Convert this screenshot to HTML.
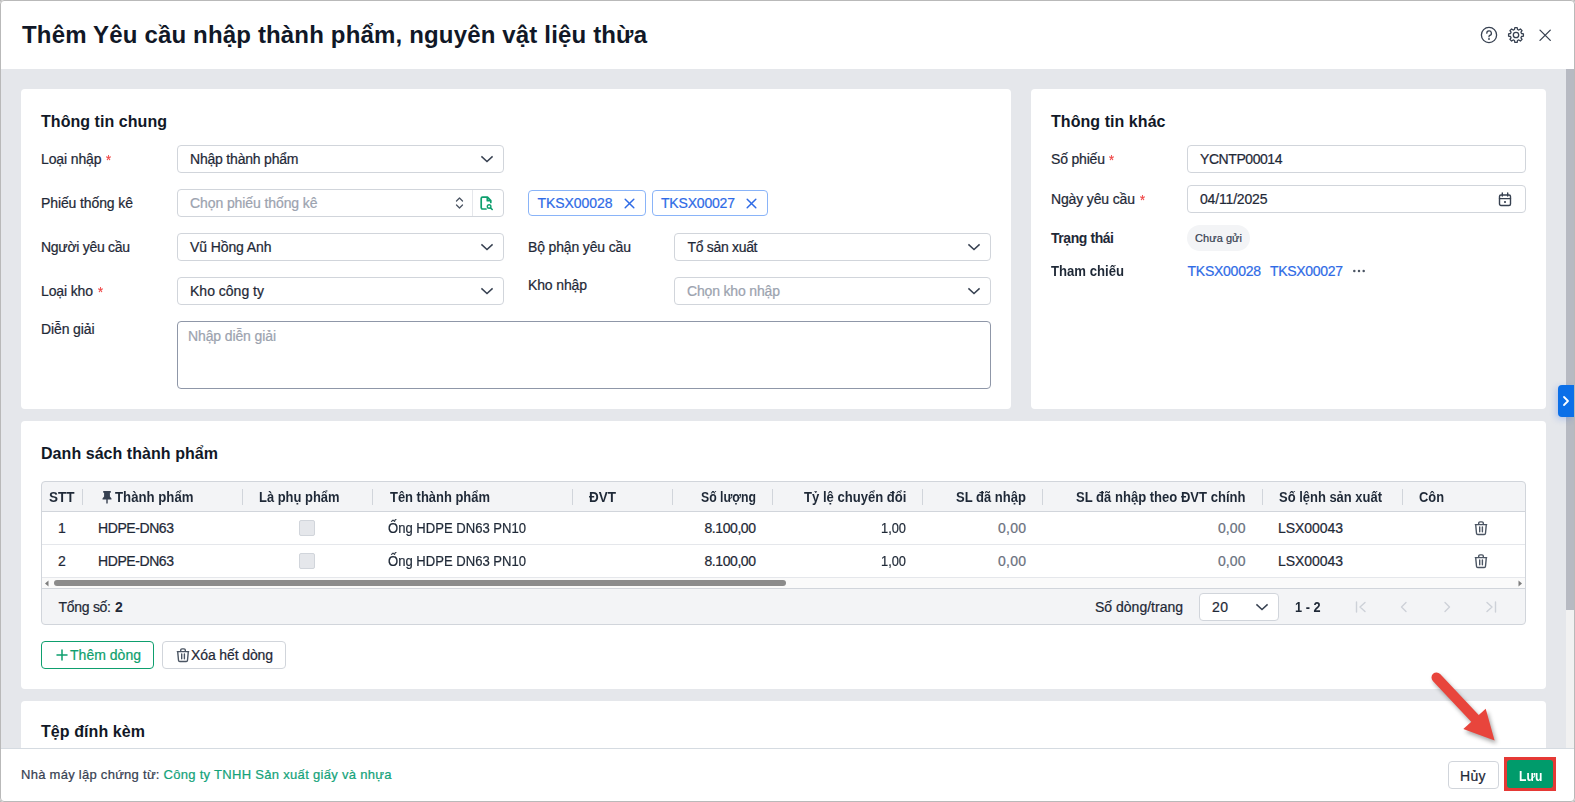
<!DOCTYPE html><html lang="vi"><head><meta charset="utf-8"><title>Thêm Yêu cầu nhập thành phẩm</title><style>
*{margin:0;padding:0;box-sizing:border-box}
html,body{width:1575px;height:802px;overflow:hidden;background:#fff}
body{font-family:"Liberation Sans",sans-serif;position:relative;color:#1f2937}
.a{position:absolute}
.t{position:absolute;white-space:nowrap;line-height:20px;height:20px}
.r{-webkit-text-stroke:0.22px currentColor}
.card{position:absolute;background:#fff;border-radius:4px}
.in{position:absolute;background:#fff;border:1px solid #d1d5db;border-radius:4px;height:28px}
svg{position:absolute;overflow:visible}
</style></head><body>
<!-- page background -->
<div class="a" style="left:0;top:69px;width:1575px;height:680px;background:#e5e7eb"></div>
<!-- cards -->
<div class="card" style="left:21px;top:89px;width:990px;height:320px"></div>
<div class="card" style="left:1031px;top:89px;width:515px;height:320px"></div>
<div class="card" style="left:21px;top:421px;width:1525px;height:268px"></div>
<div class="card" style="left:21px;top:701px;width:1525px;height:60px"></div>
<!-- vertical scrollbar -->
<div class="a" style="left:1566px;top:69px;width:8px;height:680px;background:#f1f1f1"></div>
<div class="a" style="left:1566px;top:69px;width:8px;height:541px;background:#b7bac2"></div>
<!-- blue side tab -->
<div class="a" style="left:1558px;top:385px;width:16px;height:32px;background:#0b6fe8;border-radius:4px 0 0 4px;box-shadow:-2px 2px 6px rgba(37,99,235,.25)"></div>
<svg style="left:1561px;top:394px" width="10" height="14" viewBox="0 0 10 14"><path d="M3 3 L7 7 L3 11" fill="none" stroke="#fff" stroke-width="1.8" stroke-linecap="round" stroke-linejoin="round"/></svg>

<!-- card 1 inputs -->
<div class="in" style="left:177px;top:145px;width:327px"></div>
<div class="in" style="left:177px;top:189px;width:327px"></div>
<div class="a" style="left:472px;top:190px;width:1px;height:26px;background:#e5e7eb"></div>
<div class="in" style="left:177px;top:233px;width:327px"></div>
<div class="in" style="left:177px;top:277px;width:327px"></div>
<div class="in" style="left:674px;top:233px;width:317px"></div>
<div class="in" style="left:674px;top:277px;width:317px"></div>
<div class="in" style="left:177px;top:321px;width:814px;height:68px;border-color:#8f97a8"></div>
<!-- chevrons -->
<svg style="left:480px;top:154px" width="14" height="10" viewBox="0 0 14 10"><path d="M1.400 2.400 L7 7.500 L12.600 2.400" fill="none" stroke="#374151" stroke-width="1.500" stroke-linecap="butt" stroke-linejoin="miter"/></svg>
<svg style="left:480px;top:242px" width="14" height="10" viewBox="0 0 14 10"><path d="M1.400 2.400 L7 7.500 L12.600 2.400" fill="none" stroke="#374151" stroke-width="1.500" stroke-linecap="butt" stroke-linejoin="miter"/></svg>
<svg style="left:480px;top:286px" width="14" height="10" viewBox="0 0 14 10"><path d="M1.400 2.400 L7 7.500 L12.600 2.400" fill="none" stroke="#374151" stroke-width="1.500" stroke-linecap="butt" stroke-linejoin="miter"/></svg>
<svg style="left:967px;top:242px" width="14" height="10" viewBox="0 0 14 10"><path d="M1.400 2.400 L7 7.500 L12.600 2.400" fill="none" stroke="#374151" stroke-width="1.500" stroke-linecap="butt" stroke-linejoin="miter"/></svg>
<svg style="left:967px;top:286px" width="14" height="10" viewBox="0 0 14 10"><path d="M1.400 2.400 L7 7.500 L12.600 2.400" fill="none" stroke="#374151" stroke-width="1.500" stroke-linecap="butt" stroke-linejoin="miter"/></svg>
<!-- up/down selector -->
<svg style="left:455px;top:196px" width="9" height="14" viewBox="0 0 9 14"><path d="M1.500 5 L4.500 2 L7.500 5 M1.500 9 L4.500 12 L7.500 9" fill="none" stroke="#4b5563" stroke-width="1.3" stroke-linecap="round" stroke-linejoin="round"/></svg>
<!-- file-search icon -->
<svg style="left:480px;top:196px" width="14" height="15" viewBox="0 0 14 15"><path d="M6 13 H2.6 A1.4 1.4 0 0 1 1.2 11.600 V2.600 A1.400 1.400 0 0 1 2.600 1.200 H7.500 L10.800 4.500 V6.500 M7.300 1.400 V4.700 H10.600" fill="none" stroke="#0e9f6e" stroke-width="1.7" stroke-linejoin="round" stroke-linecap="round"/><circle cx="9.100" cy="10.500" r="1.800" fill="none" stroke="#0e9f6e" stroke-width="1.400"/><path d="M10.500 11.900 L12.200 13.500" stroke="#0e9f6e" stroke-width="1.600" stroke-linecap="round"/></svg>
<!-- tags -->
<div class="a" style="left:528px;top:190px;width:118px;height:26px;border:1px solid #8ab4f8;border-radius:4px;background:#fff"></div>
<div class="a" style="left:652px;top:190px;width:116px;height:26px;border:1px solid #8ab4f8;border-radius:4px;background:#fff"></div>
<svg style="left:624px;top:198px" width="11" height="11" viewBox="0 0 11 11"><path d="M1.200 1.200 L9.800 9.800 M9.800 1.200 L1.200 9.800" stroke="#2f6be6" stroke-width="1.500" stroke-linecap="round"/></svg>
<svg style="left:746px;top:198px" width="11" height="11" viewBox="0 0 11 11"><path d="M1.200 1.200 L9.800 9.800 M9.800 1.200 L1.200 9.800" stroke="#2f6be6" stroke-width="1.500" stroke-linecap="round"/></svg>

<!-- card 2 inputs -->
<div class="in" style="left:1187px;top:145px;width:339px"></div>
<div class="in" style="left:1187px;top:185px;width:339px"></div>
<div class="a" style="left:1187px;top:225px;width:63px;height:26px;border-radius:13px;background:#f3f4f6"></div>
<!-- calendar icon -->
<svg style="left:1498px;top:192px" width="14" height="15" viewBox="0 0 14 15"><rect x="1.500" y="3" width="11" height="10.500" rx="1.500" fill="none" stroke="#374151" stroke-width="1.400"/><path d="M1.500 6.600 H12.500 M4.300 1 V4 M9.700 1 V4" stroke="#374151" stroke-width="1.400" stroke-linecap="round"/><rect x="6.200" y="9" width="1.600" height="2" fill="#374151"/></svg>
<!-- dots -->
<svg style="left:1352px;top:269px" width="14" height="4" viewBox="0 0 14 4"><circle cx="2.300" cy="2" r="1.250" fill="#4b5563"/><circle cx="7" cy="2" r="1.250" fill="#4b5563"/><circle cx="11.700" cy="2" r="1.250" fill="#4b5563"/></svg>

<!-- header icons -->
<svg style="left:1480px;top:26px" width="18" height="18" viewBox="0 0 18 18"><circle cx="9" cy="9" r="7.600" fill="none" stroke="#374151" stroke-width="1.300"/><path d="M6.800 7.200 A2.300 2.300 0 1 1 9.700 9.400 C9.200 9.600 9 9.900 9 10.500 V10.800" fill="none" stroke="#374151" stroke-width="1.300" stroke-linecap="round"/><circle cx="9" cy="13" r="0.900" fill="#374151"/></svg>
<svg style="left:1507px;top:26px" width="18" height="18" viewBox="0 0 18 18"><path d="M7.50 3.50 L7.83 1.59 L10.17 1.59 L10.50 3.50 L11.82 4.05 L13.41 2.93 L15.07 4.59 L13.95 6.18 L14.50 7.50 L16.41 7.83 L16.41 10.17 L14.50 10.50 L13.95 11.82 L15.07 13.41 L13.41 15.07 L11.82 13.95 L10.50 14.50 L10.17 16.41 L7.83 16.41 L7.50 14.50 L6.18 13.95 L4.59 15.07 L2.93 13.41 L4.05 11.82 L3.50 10.50 L1.59 10.17 L1.59 7.83 L3.50 7.50 L4.05 6.18 L2.93 4.59 L4.59 2.93 L6.18 4.05 Z" fill="none" stroke="#374151" stroke-width="1.300" stroke-linejoin="round"/><circle cx="9" cy="9" r="2.700" fill="none" stroke="#374151" stroke-width="1.300"/></svg>
<svg style="left:1539px;top:29px" width="12" height="12" viewBox="0 0 12 12"><path d="M1 1.100 L11.300 11.400 M11.300 1.100 L1 11.400" stroke="#374151" stroke-width="1.300" stroke-linecap="round"/></svg>
<!-- table -->
<div class="a" style="left:41px;top:481px;width:1485px;height:144px;border:1px solid #d1d5db;border-radius:4px;background:#f3f4f6;overflow:hidden">
  <div class="a" style="left:0;top:29px;width:1483px;height:1px;background:#d1d5db"></div>
  <div class="a" style="left:0;top:30px;width:1483px;height:66px;background:#fff"></div>
  <div class="a" style="left:0;top:62px;width:1483px;height:1px;background:#e5e7eb"></div>
  <div class="a" style="left:0;top:95px;width:1483px;height:1px;background:#e5e7eb"></div>
  <div class="a" style="left:0;top:96px;width:1483px;height:10px;background:#fafafa"></div>
  <div class="a" style="left:0;top:106px;width:1483px;height:1px;background:#d1d5db"></div>
  <!-- h scrollbar thumb -->
  <div class="a" style="left:12px;top:98px;width:732px;height:6px;border-radius:3px;background:#8b8b8b"></div>
</div>
<!-- header separators -->
<div class="a" style="left:82px;top:489px;width:1px;height:16px;background:#d1d5db"></div>
<div class="a" style="left:242px;top:489px;width:1px;height:16px;background:#d1d5db"></div>
<div class="a" style="left:372px;top:489px;width:1px;height:16px;background:#d1d5db"></div>
<div class="a" style="left:572px;top:489px;width:1px;height:16px;background:#d1d5db"></div>
<div class="a" style="left:672px;top:489px;width:1px;height:16px;background:#d1d5db"></div>
<div class="a" style="left:772px;top:489px;width:1px;height:16px;background:#d1d5db"></div>
<div class="a" style="left:922px;top:489px;width:1px;height:16px;background:#d1d5db"></div>
<div class="a" style="left:1042px;top:489px;width:1px;height:16px;background:#d1d5db"></div>
<div class="a" style="left:1262px;top:489px;width:1px;height:16px;background:#d1d5db"></div>
<div class="a" style="left:1402px;top:489px;width:1px;height:16px;background:#d1d5db"></div>
<!-- scroll arrows -->
<svg style="left:44px;top:580px" width="5" height="7" viewBox="0 0 5 7"><path d="M4.500 0.500 L1 3.500 L4.500 6.500 Z" fill="#7d7d7d"/></svg>
<svg style="left:1518px;top:580px" width="5" height="7" viewBox="0 0 5 7"><path d="M0.500 0.500 L4 3.500 L0.500 6.500 Z" fill="#7d7d7d"/></svg>
<!-- pin icon -->
<svg style="left:102px;top:491px" width="10" height="13" viewBox="0 0 10 13"><path d="M1.200 0 H8.800 V1.700 H7.900 V5.400 L9.500 7.400 V8.500 H5.700 V12 L5 13 L4.300 12 V8.500 H0.500 V7.400 L2.100 5.400 V1.700 H1.200 Z" fill="#374151"/></svg>
<!-- checkboxes -->
<div class="a" style="left:299px;top:520px;width:16px;height:16px;border:1px solid #d1d5db;border-radius:2px;background:#e5e7eb"></div>
<div class="a" style="left:299px;top:553px;width:16px;height:16px;border:1px solid #d1d5db;border-radius:2px;background:#e5e7eb"></div>
<!-- trash icons -->
<svg style="left:1474px;top:521px" width="14" height="15" viewBox="0 0 14 15"><path d="M1.300 3.600 H12.700 M4.700 3.400 V2.200 A1.300 1.300 0 0 1 6 0.900 H8 A1.300 1.300 0 0 1 9.300 2.200 V3.400 M1.700 3.800 L2.500 12.300 A1.300 1.300 0 0 0 3.800 13.500 H10.200 A1.300 1.300 0 0 0 11.500 12.300 L12.300 3.800 M5.700 6 V10.700 M8.400 6 V10.700" fill="none" stroke="#4b5563" stroke-width="1.400" stroke-linecap="round" stroke-linejoin="round"/></svg>
<svg style="left:1474px;top:554px" width="14" height="15" viewBox="0 0 14 15"><path d="M1.300 3.600 H12.700 M4.700 3.400 V2.200 A1.300 1.300 0 0 1 6 0.900 H8 A1.300 1.300 0 0 1 9.300 2.200 V3.400 M1.700 3.800 L2.500 12.300 A1.300 1.300 0 0 0 3.800 13.500 H10.200 A1.300 1.300 0 0 0 11.500 12.300 L12.300 3.800 M5.700 6 V10.700 M8.400 6 V10.700" fill="none" stroke="#4b5563" stroke-width="1.400" stroke-linecap="round" stroke-linejoin="round"/></svg>
<!-- page size select -->
<div class="in" style="left:1199px;top:593px;width:80px"></div>
<svg style="left:1255px;top:602px" width="14" height="10" viewBox="0 0 14 10"><path d="M1.400 2.400 L7 7.500 L12.600 2.400" fill="none" stroke="#374151" stroke-width="1.500" stroke-linecap="butt" stroke-linejoin="miter"/></svg>
<!-- pager icons -->
<svg style="left:1355px;top:601px" width="12" height="12" viewBox="0 0 12 12"><path d="M1.500 1 V11 M10 1.500 L5 6 L10 10.500" fill="none" stroke="#cdd1d8" stroke-width="1.400" stroke-linecap="round" stroke-linejoin="round"/></svg>
<svg style="left:1398px;top:601px" width="12" height="12" viewBox="0 0 12 12"><path d="M8 1.500 L3.500 6 L8 10.500" fill="none" stroke="#cdd1d8" stroke-width="1.400" stroke-linecap="round" stroke-linejoin="round"/></svg>
<svg style="left:1441px;top:601px" width="12" height="12" viewBox="0 0 12 12"><path d="M4 1.500 L8.500 6 L4 10.500" fill="none" stroke="#cdd1d8" stroke-width="1.400" stroke-linecap="round" stroke-linejoin="round"/></svg>
<svg style="left:1485px;top:601px" width="12" height="12" viewBox="0 0 12 12"><path d="M10.500 1 V11 M2 1.500 L7 6 L2 10.500" fill="none" stroke="#cdd1d8" stroke-width="1.400" stroke-linecap="round" stroke-linejoin="round"/></svg>
<!-- buttons below table -->
<div class="a" style="left:41px;top:641px;width:113px;height:28px;border:1px solid #0e9f6e;border-radius:4px;background:#fff"></div>
<svg style="left:56px;top:649px" width="12" height="12" viewBox="0 0 12 12"><path d="M6 1 V11 M1 6 H11" stroke="#0e9f6e" stroke-width="1.500" stroke-linecap="round"/></svg>
<div class="a" style="left:162px;top:641px;width:124px;height:28px;border:1px solid #d1d5db;border-radius:4px;background:#fff"></div>
<svg style="left:176px;top:647.500px" width="14" height="15" viewBox="0 0 14 15"><path d="M1.300 3.600 H12.700 M4.700 3.400 V2.200 A1.300 1.300 0 0 1 6 0.900 H8 A1.300 1.300 0 0 1 9.300 2.200 V3.400 M1.700 3.800 L2.500 12.300 A1.300 1.300 0 0 0 3.800 13.500 H10.200 A1.300 1.300 0 0 0 11.500 12.300 L12.300 3.800 M5.700 6 V10.700 M8.400 6 V10.700" fill="none" stroke="#4b5563" stroke-width="1.400" stroke-linecap="round" stroke-linejoin="round"/></svg>

<!-- footer -->
<div class="a" style="left:0;top:748px;width:1575px;height:54px;background:#fff;border-top:1px solid #d5dbe1"></div>
<div class="a" style="left:1448px;top:761px;width:51px;height:28px;border:1px solid #d1d5db;border-radius:4px;background:#fff"></div>
<div class="a" style="left:1504px;top:757px;width:52px;height:34px;background:#e53935"></div>
<div class="a" style="left:1507px;top:760px;width:46px;height:28px;background:#009b6b;border-radius:3px"></div>
<!-- red arrow -->
<svg style="left:1420px;top:660px;filter:drop-shadow(2px 3px 2px rgba(0,0,0,.35))" width="90" height="90" viewBox="1420 660 90 90"><path d="M1436.500 677.500 L1476 719.500" stroke="#e8453c" stroke-width="10" stroke-linecap="round" fill="none"/><path d="M1485.700 708.700 L1494.600 740.500 L1463.300 729 Z" fill="#e8453c"/></svg>
<!-- window frame -->
<div class="a" style="left:0;top:0;width:1575px;height:802px;border:1px solid #b9b9b9;border-radius:4px;box-shadow:0 0 0 4px #b9b9b9;pointer-events:none"></div>

<span class="t" id="t0" style="left:22px;top:24.5px;font-size:24px;font-weight:700;color:#111827;letter-spacing:0.163px;">Thêm Yêu cầu nhập thành phẩm, nguyên vật liệu thừa</span>
<span class="t" id="t1" style="left:41px;top:112px;font-size:16px;font-weight:700;color:#111827;letter-spacing:0.050px;">Thông tin chung</span>
<span class="t r" id="t2" style="left:41px;top:149px;font-size:14px;font-weight:400;color:#1f2937;letter-spacing:-0.127px;">Loại nhập</span>
<span class="t r" id="t3" style="left:106px;top:150px;font-size:14px;font-weight:400;color:#ef4444;transform:scaleX(0.9169);transform-origin:0 0;">*</span>
<span class="t r" id="t4" style="left:190px;top:149px;font-size:14px;font-weight:400;color:#1f2937;letter-spacing:-0.201px;">Nhập thành phẩm</span>
<span class="t r" id="t5" style="left:41px;top:193px;font-size:14px;font-weight:400;color:#1f2937;letter-spacing:-0.108px;">Phiếu thống kê</span>
<span class="t r" id="t6" style="left:190px;top:193px;font-size:14px;font-weight:400;color:#9ca3af;letter-spacing:-0.095px;">Chọn phiếu thống kê</span>
<span class="t r" id="t7" style="left:41px;top:237px;font-size:14px;font-weight:400;color:#1f2937;letter-spacing:-0.290px;">Người yêu cầu</span>
<span class="t r" id="t8" style="left:190px;top:237px;font-size:14px;font-weight:400;color:#1f2937;letter-spacing:-0.102px;">Vũ Hồng Anh</span>
<span class="t r" id="t9" style="left:41px;top:281px;font-size:14px;font-weight:400;color:#1f2937;letter-spacing:-0.134px;">Loại kho</span>
<span class="t r" id="t10" style="left:97.5px;top:282px;font-size:14px;font-weight:400;color:#ef4444;transform:scaleX(0.9169);transform-origin:0 0;">*</span>
<span class="t r" id="t11" style="left:190px;top:281px;font-size:14px;font-weight:400;color:#1f2937;letter-spacing:0.006px;">Kho công ty</span>
<span class="t r" id="t12" style="left:41px;top:319px;font-size:14px;font-weight:400;color:#1f2937;letter-spacing:-0.123px;">Diễn giải</span>
<span class="t r" id="t13" style="left:188px;top:326px;font-size:14px;font-weight:400;color:#9ca3af;letter-spacing:-0.117px;">Nhập diễn giải</span>
<span class="t r" id="t14" style="left:528px;top:237px;font-size:14px;font-weight:400;color:#1f2937;letter-spacing:-0.150px;">Bộ phận yêu cầu</span>
<span class="t r" id="t15" style="left:687.5px;top:237px;font-size:14px;font-weight:400;color:#1f2937;letter-spacing:-0.316px;">Tổ sản xuất</span>
<span class="t r" id="t16" style="left:528px;top:275px;font-size:14px;font-weight:400;color:#1f2937;letter-spacing:-0.136px;">Kho nhập</span>
<span class="t r" id="t17" style="left:687px;top:281px;font-size:14px;font-weight:400;color:#9ca3af;letter-spacing:-0.164px;">Chọn kho nhập</span>
<span class="t r" id="t18" style="left:537.5px;top:193px;font-size:14px;font-weight:400;color:#2f6be6;letter-spacing:-0.062px;">TKSX00028</span>
<span class="t r" id="t19" style="left:661px;top:193px;font-size:14px;font-weight:400;color:#2f6be6;letter-spacing:-0.188px;">TKSX00027</span>
<span class="t" id="t20" style="left:1051px;top:112px;font-size:16px;font-weight:700;color:#111827;letter-spacing:0.055px;">Thông tin khác</span>
<span class="t r" id="t21" style="left:1051px;top:149px;font-size:14px;font-weight:400;color:#1f2937;letter-spacing:-0.183px;">Số phiếu</span>
<span class="t r" id="t22" style="left:1109px;top:150px;font-size:14px;font-weight:400;color:#ef4444;transform:scaleX(0.9169);transform-origin:0 0;">*</span>
<span class="t r" id="t23" style="left:1200px;top:149px;font-size:14px;font-weight:400;color:#1f2937;letter-spacing:-0.432px;">YCNTP00014</span>
<span class="t r" id="t24" style="left:1051px;top:189px;font-size:14px;font-weight:400;color:#1f2937;letter-spacing:-0.146px;">Ngày yêu cầu</span>
<span class="t r" id="t25" style="left:1140px;top:190px;font-size:14px;font-weight:400;color:#ef4444;transform:scaleX(0.9169);transform-origin:0 0;">*</span>
<span class="t r" id="t26" style="left:1200px;top:189px;font-size:14px;font-weight:400;color:#1f2937;letter-spacing:-0.170px;">04/11/2025</span>
<span class="t" id="t27" style="left:1051px;top:228px;font-size:14px;font-weight:700;color:#1f2937;letter-spacing:-0.434px;">Trạng thái</span>
<span class="t r" id="t28" style="left:1195px;top:227.5px;font-size:11px;font-weight:400;color:#374151;letter-spacing:0.067px;">Chưa gửi</span>
<span class="t" id="t29" style="left:1051px;top:261px;font-size:14px;font-weight:700;color:#1f2937;transform:scaleX(0.9383);transform-origin:0 0;">Tham chiếu</span>
<span class="t r" id="t30" style="left:1187.5px;top:261px;font-size:14px;font-weight:400;color:#2f6be6;letter-spacing:-0.250px;">TKSX00028</span>
<span class="t r" id="t31" style="left:1270px;top:261px;font-size:14px;font-weight:400;color:#2f6be6;letter-spacing:-0.312px;">TKSX00027</span>
<span class="t" id="t32" style="left:41px;top:444px;font-size:16px;font-weight:700;color:#111827;letter-spacing:0.051px;">Danh sách thành phẩm</span>
<span class="t" id="t33" style="left:48.5px;top:487px;font-size:14px;font-weight:700;color:#1f2937;transform:scaleX(0.9640);transform-origin:0 0;">STT</span>
<span class="t" id="t34" style="left:115px;top:487px;font-size:14px;font-weight:700;color:#1f2937;transform:scaleX(0.9431);transform-origin:0 0;">Thành phẩm</span>
<span class="t" id="t35" style="left:259px;top:487px;font-size:14px;font-weight:700;color:#1f2937;transform:scaleX(0.9240);transform-origin:0 0;">Là phụ phẩm</span>
<span class="t" id="t36" style="left:389.5px;top:487px;font-size:14px;font-weight:700;color:#1f2937;transform:scaleX(0.9249);transform-origin:0 0;">Tên thành phẩm</span>
<span class="t" id="t37" style="left:589px;top:487px;font-size:14px;font-weight:700;color:#1f2937;transform:scaleX(0.9643);transform-origin:0 0;">ĐVT</span>
<span class="t" id="t38" style="left:701px;top:487px;font-size:14px;font-weight:700;color:#1f2937;transform:scaleX(0.8748);transform-origin:0 0;">Số lượng</span>
<span class="t" id="t39" style="left:803.5px;top:487px;font-size:14px;font-weight:700;color:#1f2937;transform:scaleX(0.9343);transform-origin:0 0;">Tỷ lệ chuyển đổi</span>
<span class="t" id="t40" style="left:956px;top:487px;font-size:14px;font-weight:700;color:#1f2937;transform:scaleX(0.9308);transform-origin:0 0;">SL đã nhập</span>
<span class="t" id="t41" style="left:1076px;top:487px;font-size:14px;font-weight:700;color:#1f2937;transform:scaleX(0.9326);transform-origin:0 0;">SL đã nhập theo ĐVT chính</span>
<span class="t" id="t42" style="left:1279px;top:487px;font-size:14px;font-weight:700;color:#1f2937;transform:scaleX(0.9258);transform-origin:0 0;">Số lệnh sản xuất</span>
<span class="t" id="t43" style="left:1419px;top:487px;font-size:14px;font-weight:700;color:#1f2937;transform:scaleX(0.9185);transform-origin:0 0;">Côn</span>
<span class="t r" id="t44" style="left:58px;top:518px;font-size:14px;font-weight:400;color:#1f2937;letter-spacing:0.203px;">1</span>
<span class="t r" id="t45" style="left:98px;top:518px;font-size:14px;font-weight:400;color:#1f2937;letter-spacing:-0.420px;">HDPE-DN63</span>
<span class="t r" id="t46" style="left:388px;top:518px;font-size:14px;font-weight:400;color:#1f2937;transform:scaleX(0.9334);transform-origin:0 0;">Ống HDPE DN63 PN10</span>
<span class="t r" id="t47" style="left:704.5px;top:518px;font-size:14px;font-weight:400;color:#1f2937;letter-spacing:-0.429px;">8.100,00</span>
<span class="t r" id="t48" style="left:881px;top:518px;font-size:14px;font-weight:400;color:#1f2937;transform:scaleX(0.9174);transform-origin:0 0;">1,00</span>
<span class="t r" id="t49" style="left:998px;top:518px;font-size:14px;font-weight:400;color:#6b7280;letter-spacing:0.250px;">0,00</span>
<span class="t r" id="t50" style="left:1218px;top:518px;font-size:14px;font-weight:400;color:#6b7280;letter-spacing:0.083px;">0,00</span>
<span class="t r" id="t51" style="left:1278px;top:518px;font-size:14px;font-weight:400;color:#1f2937;letter-spacing:-0.058px;">LSX00043</span>
<span class="t r" id="t52" style="left:58px;top:551px;font-size:14px;font-weight:400;color:#1f2937;letter-spacing:0.203px;">2</span>
<span class="t r" id="t53" style="left:98px;top:551px;font-size:14px;font-weight:400;color:#1f2937;letter-spacing:-0.420px;">HDPE-DN63</span>
<span class="t r" id="t54" style="left:388px;top:551px;font-size:14px;font-weight:400;color:#1f2937;transform:scaleX(0.9334);transform-origin:0 0;">Ống HDPE DN63 PN10</span>
<span class="t r" id="t55" style="left:704.5px;top:551px;font-size:14px;font-weight:400;color:#1f2937;letter-spacing:-0.429px;">8.100,00</span>
<span class="t r" id="t56" style="left:881px;top:551px;font-size:14px;font-weight:400;color:#1f2937;transform:scaleX(0.9174);transform-origin:0 0;">1,00</span>
<span class="t r" id="t57" style="left:998px;top:551px;font-size:14px;font-weight:400;color:#6b7280;letter-spacing:0.250px;">0,00</span>
<span class="t r" id="t58" style="left:1218px;top:551px;font-size:14px;font-weight:400;color:#6b7280;letter-spacing:0.083px;">0,00</span>
<span class="t r" id="t59" style="left:1278px;top:551px;font-size:14px;font-weight:400;color:#1f2937;letter-spacing:-0.058px;">LSX00043</span>
<span class="t r" id="t60" style="left:58.5px;top:597px;font-size:14px;font-weight:400;color:#1f2937;letter-spacing:-0.283px;">Tổng số:</span>
<span class="t" id="t61" style="left:115px;top:597px;font-size:14px;font-weight:700;color:#1f2937;letter-spacing:0.203px;">2</span>
<span class="t r" id="t62" style="left:1095px;top:597px;font-size:14px;font-weight:400;color:#1f2937;letter-spacing:0.003px;">Số dòng/trang</span>
<span class="t r" id="t63" style="left:1212px;top:597px;font-size:14px;font-weight:400;color:#1f2937;letter-spacing:0.422px;">20</span>
<span class="t" id="t64" style="left:1295px;top:597px;font-size:14px;font-weight:700;color:#1f2937;transform:scaleX(0.9102);transform-origin:0 0;">1 - 2</span>
<span class="t r" id="t65" style="left:70px;top:645px;font-size:14px;font-weight:400;color:#0e9f6e;letter-spacing:0.021px;">Thêm dòng</span>
<span class="t r" id="t66" style="left:191px;top:645px;font-size:14px;font-weight:400;color:#1f2937;letter-spacing:-0.118px;">Xóa hết dòng</span>
<span class="t" id="t67" style="left:41px;top:722px;font-size:16px;font-weight:700;color:#111827;letter-spacing:0.080px;">Tệp đính kèm</span>
<span class="t r" id="t68" style="left:21px;top:765px;font-size:13px;font-weight:400;color:#374151;letter-spacing:0.273px;">Nhà máy lập chứng từ:</span>
<span class="t r" id="t69" style="left:163.5px;top:765px;font-size:13px;font-weight:400;color:#14a37a;letter-spacing:0.302px;">Công ty TNHH Sản xuất giấy và nhựa</span>
<span class="t r" id="t70" style="left:1460px;top:766px;font-size:14px;font-weight:400;color:#1f2937;letter-spacing:0.297px;">Hủy</span>
<span class="t" id="t71" style="left:1518.5px;top:766px;font-size:14px;font-weight:700;color:#ffffff;transform:scaleX(0.8624);transform-origin:0 0;">Lưu</span>
</body></html>
